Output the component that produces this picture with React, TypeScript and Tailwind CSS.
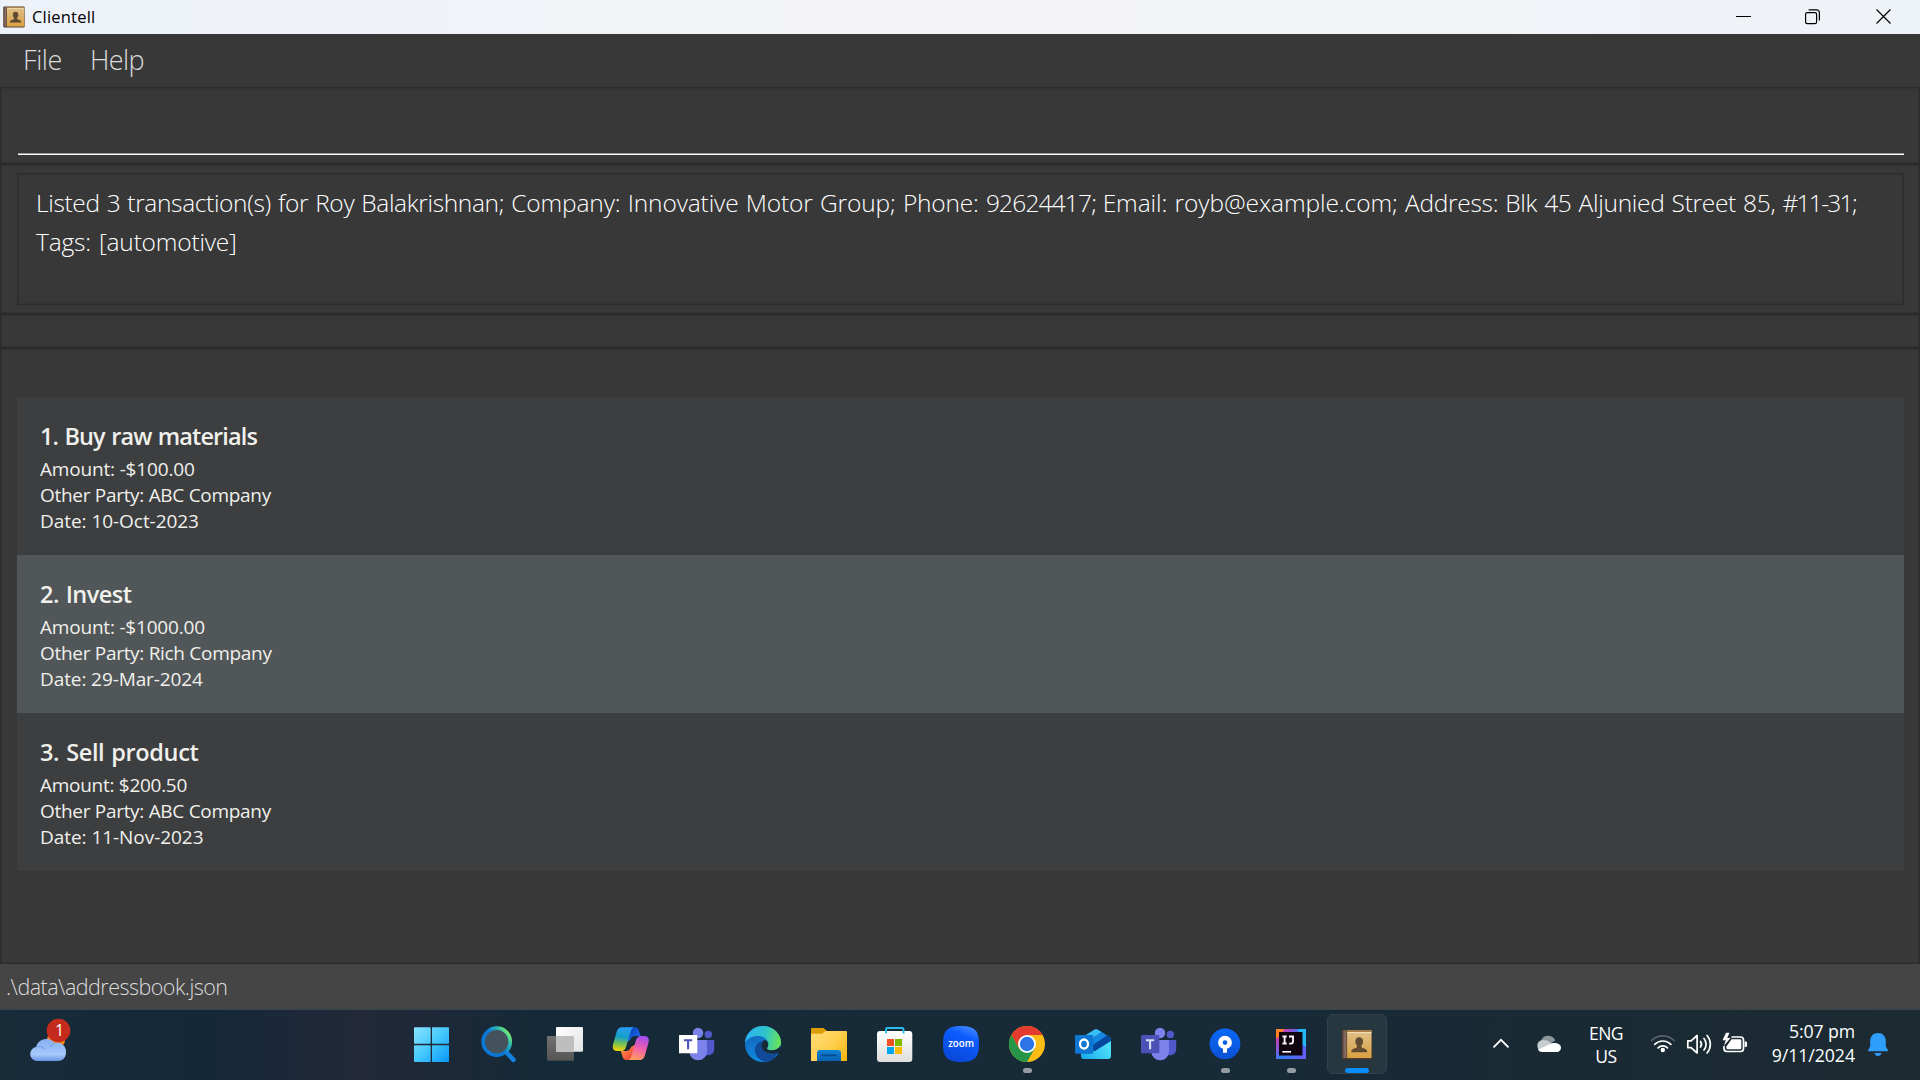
import React from "react";

type IconProps = { children: React.ReactNode };

function Slot({ children }: IconProps) {
  return (
    <svg width="66" height="70" viewBox="0 0 66 70" className="block shrink-0">
      {children}
    </svg>
  );
}

function Running() {
  return <rect x="29" y="58" width="9" height="5" rx="2.5" fill="#949ca2" />;
}

function BookIcon({ className }: { className: string }) {
  return (
    <svg viewBox="0 0 32 32" className={className}>
      <defs>
        <linearGradient id="bookCover" x1="0" y1="0" x2="0" y2="1">
          <stop offset="0" stopColor="#e0c088" />
          <stop offset="0.5" stopColor="#dcb168" />
          <stop offset="1" stopColor="#d9a040" />
        </linearGradient>
        <linearGradient id="bookSpine" x1="0" y1="0" x2="1" y2="0">
          <stop offset="0" stopColor="#5f4a42" />
          <stop offset="0.6" stopColor="#8b7264" />
          <stop offset="1" stopColor="#5c4638" />
        </linearGradient>
      </defs>
      <rect x="0.5" y="0.8" width="31" height="30.4" rx="1.2" fill="#4a3628" />
      <rect x="5.5" y="1.5" width="25.5" height="28.5" fill="url(#bookCover)" />
      <rect x="5.5" y="1.5" width="25.5" height="1.6" fill="#a88048" />
      <rect x="5.5" y="3.1" width="25.5" height="1.2" fill="#f0dcb0" />
      <rect x="1" y="1.5" width="4.8" height="28.5" fill="url(#bookSpine)" />
      <path
        d="M18.3 8.4c2.5 0 4 1.8 4 4.3 0 2-.8 3.500-1.700 4.600-.2 1.500.4 2.100 2 2.600 2.200.7 4 1.300 4 4H10c0-2.700 1.800-3.300 4-4 1.600-.5 2.200-1.100 2-2.600-.9-1.100-1.700-2.600-1.700-4.600 0-2.500 1.500-4.300 4-4.300z"
        fill="#604a30"
      />
    </svg>
  );
}

function TitleBar() {
  return (
    <header className="flex h-[34px] items-center justify-between bg-linear-to-r from-[#edf2fa] via-[#f3f3f5] to-[#eef3f8] text-black">
      <div className="flex items-center pl-[3px]">
        <BookIcon className="size-[22px]" />
        <span className="ml-[7px] pt-px text-[16.500px] tracking-[0.200px]">Clientell</span>
      </div>
      <div className="flex items-center pr-[29px]">
        <svg width="15" height="16" viewBox="0 0 15 16" className="mr-[54px]">
          <path d="M0 7.500h15" stroke="#000" strokeWidth="1" />
        </svg>
        <svg width="15" height="16" viewBox="0 0 15 16" className="mr-[56px]" fill="none" stroke="#000" strokeWidth="1.200">
          <rect x="0.6" y="3.6" width="11" height="11" rx="1.6" />
          <path d="M3.600 0.800h8.200a2.600 2.600 0 0 1 2.600 2.600v8" />
        </svg>
        <svg width="15" height="16" viewBox="0 0 15 16">
          <path d="M0.500 0.500l14 14M14.500 0.500l-14 14" stroke="#000" strokeWidth="1.200" />
        </svg>
      </div>
    </header>
  );
}

function MenuBar() {
  return (
    <nav className="flex h-[53px] items-center pb-px pl-[23px] text-[27px] font-light text-[#dcdcdc]">
      <span className="w-[67px] tracking-[-0.400px]">File</span>
      <span className="tracking-[-0.600px]">Help</span>
    </nav>
  );
}

type Line = { text: string; tracking: string };

type Transaction = {
  title: Line;
  details: Line[];
  shade: string;
};

const resultParts: Line[] = [
  { text: "Listed 3 transaction(s) for Roy Balakrishnan; ", tracking: "tracking-[-0.350px]" },
  { text: "Company: Innovative Motor Group; ", tracking: "tracking-[-0.130px]" },
  { text: "Phone: ", tracking: "tracking-[-0.180px]" },
  { text: "92624417; ", tracking: "tracking-[-0.840px]" },
  { text: "Email: royb@example.com; ", tracking: "tracking-[-0.080px]" },
  { text: "Address: Blk 45 Aljunied Street 85, ", tracking: "tracking-[-0.300px]" },
  { text: "#11-31;", tracking: "tracking-[-1.700px]" },
];

const transactions: Transaction[] = [
  {
    title: { text: "1. Buy raw materials", tracking: "tracking-[-0.900px]" },
    details: [
      { text: "Amount: -$100.00", tracking: "tracking-[-0.170px]" },
      { text: "Other Party: ABC Company", tracking: "tracking-[-0.300px]" },
      { text: "Date: 10-Oct-2023", tracking: "tracking-[-0.050px]" },
    ],
    shade: "bg-[#3c3e3f]",
  },
  {
    title: { text: "2. Invest", tracking: "tracking-[-0.500px]" },
    details: [
      { text: "Amount: -$1000.00", tracking: "tracking-[-0.200px]" },
      { text: "Other Party: Rich Company", tracking: "tracking-[-0.300px]" },
      { text: "Date: 29-Mar-2024", tracking: "tracking-[-0.100px]" },
    ],
    shade: "bg-[#515658]",
  },
  {
    title: { text: "3. Sell product", tracking: "tracking-[-0.350px]" },
    details: [
      { text: "Amount: $200.50", tracking: "tracking-[-0.280px]" },
      { text: "Other Party: ABC Company", tracking: "tracking-[-0.300px]" },
      { text: "Date: 11-Nov-2023", tracking: "tracking-[-0.050px]" },
    ],
    shade: "bg-[#3c3e3f]",
  },
];

function TransactionCard({ item }: { item: Transaction }) {
  return (
    <li className={`h-[158px] pl-[23px] pt-[22px] text-[#f0f0ec] ${item.shade}`}>
      <h2 className={`h-[34px] text-[23.500px] leading-[34px] font-semibold [word-spacing:1.200px] ${item.title.tracking}`}>
        {item.title.text}
      </h2>
      <div className="pt-[3px] text-[19px] leading-[26px]">
        {item.details.map((line) => (
          <p key={line.text} className={line.tracking}>
            {line.text}
          </p>
        ))}
      </div>
    </li>
  );
}

function StartIcon() {
  return (
    <Slot>
      <defs>
        <linearGradient id="win" x1="14" y1="17" x2="49" y2="52" gradientUnits="userSpaceOnUse">
          <stop offset="0" stopColor="#8ae4ff" />
          <stop offset="0.5" stopColor="#45c8fc" />
          <stop offset="1" stopColor="#0897fa" />
        </linearGradient>
      </defs>
      <g fill="url(#win)">
        <rect x="14" y="17.300" width="16.700" height="16.500" rx="0.800" />
        <rect x="32" y="17.300" width="17" height="16.500" rx="0.800" />
        <rect x="14" y="35.300" width="16.700" height="16.700" rx="0.800" />
        <rect x="32" y="35.300" width="17" height="16.700" rx="0.800" />
      </g>
    </Slot>
  );
}

function SearchIcon() {
  return (
    <Slot>
      <defs>
        <linearGradient id="lens" x1="18" y1="38" x2="42" y2="20" gradientUnits="userSpaceOnUse">
          <stop offset="0.45" stopColor="#0a78d4" />
          <stop offset="0.75" stopColor="#2bb5b8" />
          <stop offset="0.95" stopColor="#6fe870" />
        </linearGradient>
      </defs>
      <path d="M41.500 43.500l6 6.300" stroke="#1280dc" strokeWidth="4.600" strokeLinecap="round" />
      <circle cx="30.700" cy="31.700" r="13.500" fill="#44525c" stroke="url(#lens)" strokeWidth="3.700" />
    </Slot>
  );
}

function TaskViewIcon() {
  return (
    <Slot>
      <defs>
        <linearGradient id="tvBack" x1="0" y1="0" x2="0" y2="1">
          <stop offset="0" stopColor="#727272" />
          <stop offset="1" stopColor="#545454" />
        </linearGradient>
        <linearGradient id="tvFront" x1="0" y1="0" x2="1" y2="1">
          <stop offset="0" stopColor="#ffffff" />
          <stop offset="1" stopColor="#e2e2e2" />
        </linearGradient>
      </defs>
      <rect x="15" y="26" width="27" height="24.700" rx="1.300" fill="url(#tvBack)" />
      <rect x="24" y="17" width="27" height="24.700" rx="1.300" fill="url(#tvFront)" />
      <path d="M24 26h16.700a1.300 1.300 0 0 1 1.300 1.300v14.400H25.300a1.300 1.300 0 0 1-1.300-1.300z" fill="#bebebe" />
    </Slot>
  );
}

function CopilotIcon() {
  return (
    <Slot>
      <defs>
        <linearGradient id="cpA" x1="22" y1="17" x2="19" y2="41" gradientUnits="userSpaceOnUse">
          <stop offset="0" stopColor="#2a9cf0" />
          <stop offset="0.4" stopColor="#14a0c8" />
          <stop offset="0.7" stopColor="#7cc250" />
          <stop offset="1" stopColor="#ffd400" />
        </linearGradient>
        <linearGradient id="cpB" x1="44" y1="26" x2="38" y2="50" gradientUnits="userSpaceOnUse">
          <stop offset="0" stopColor="#a14cf0" />
          <stop offset="0.5" stopColor="#f05fae" />
          <stop offset="1" stopColor="#ff9d5c" />
        </linearGradient>
        <linearGradient id="cpC" x1="32" y1="17" x2="42" y2="26" gradientUnits="userSpaceOnUse">
          <stop offset="0" stopColor="#0b40b8" />
          <stop offset="1" stopColor="#1c68e8" />
        </linearGradient>
        <linearGradient id="cpD" x1="24" y1="41" x2="33" y2="50" gradientUnits="userSpaceOnUse">
          <stop offset="0" stopColor="#ff8a3c" />
          <stop offset="1" stopColor="#ee3f42" />
        </linearGradient>
      </defs>
      <path d="M28 17.300h9c2.300 0 3.300 1.300 4 3.600l1.600 5.100h-5.300c-2.600 0-4 1.200-4.800 3.800L28 33z" fill="url(#cpC)" />
      <path d="M37 50h-8.500c-2.300 0-3.300-1.300-4-3.600L22.800 41h5c2.700 0 4.200-1.200 5-3.800L38 34z" fill="url(#cpD)" />
      <path d="M24 17.300h12.500c-2 .3-3 1.600-3.700 3.900l-4.600 15.300c-.9 3-2.300 4.500-5.100 4.500h-4c-4 0-5-3.200-3.900-7l3.300-11.700c1-3.600 2.500-5 5.500-5z" fill="url(#cpA)" />
      <path d="M41.500 50H29.700c2-.3 3-1.600 3.700-3.900l4.500-15.600c.9-3 2.300-4.500 5.100-4.500h3.500c4 0 5 3.200 3.900 7L47 45c-1 3.600-2.500 5-5.500 5z" fill="url(#cpB)" />
    </Slot>
  );
}

function TeamsIcon({ personal }: { personal: boolean }) {
  return (
    <Slot>
      <circle cx="44.300" cy="24.400" r="3.700" fill="#5059c9" />
      <circle cx="34" cy="23" r="5.200" fill="#7b83eb" />
      <path d="M39 30h11.200v9.500a5.800 5.800 0 0 1-5.800 5.800H39z" fill="#5059c9" />
      <path d="M25.300 30H42a1 1 0 0 1 1 1v10.500a8.800 8.800 0 0 1-17.700 0z" fill="#7b83eb" />
      <rect x="15" y="25" width="18.300" height="18.300" rx={personal ? 1 : 0.300} fill={personal ? "#4a52b5" : "#ffffff"} />
      <path d="M20 30.300h8.200M24.100 30v9.200" stroke={personal ? "#d9dbf5" : "#4b53bc"} strokeWidth="2.100" />
    </Slot>
  );
}

function EdgeIcon() {
  return (
    <Slot>
      <defs>
        <linearGradient id="edTop" x1="16" y1="26" x2="51" y2="34" gradientUnits="userSpaceOnUse">
          <stop offset="0" stopColor="#2db4f0" />
          <stop offset="0.500" stopColor="#2cc4cc" />
          <stop offset="1" stopColor="#6fe650" />
        </linearGradient>
        <linearGradient id="edLeft" x1="20" y1="26" x2="28" y2="52" gradientUnits="userSpaceOnUse">
          <stop offset="0" stopColor="#1468c0" />
          <stop offset="1" stopColor="#0c8ee4" />
        </linearGradient>
      </defs>
      <circle cx="33" cy="34" r="18" fill="url(#edLeft)" />
      <path d="M15 33C15.500 23.500 23 16 33 16c10.500 0 18 8 18 16 0 5-3.800 8.300-9 8.300-3.200 0-5-.8-5-1.900 0-.8 1.300-1.700 1.300-4.100 0-4-4-8.300-10-8.300-6.300 0-11.300 2.700-13.300 7z" fill="url(#edTop)" />
      <path d="M38.300 34.300c0 2.400-1.300 3.300-1.300 4.100 0 1.100 1.800 1.900 5 1.900 3.800 0 6.800-1.700 8.200-4.500l2 6-3.600 1.500c-3.300 1-7 1-10.600 0-4.500-1.300-6.800-4.600-6.800-7.800 0-2.200 1.200-4.300 3-5.400 2.700.2 4.100 2.200 4.100 4.200z" fill="#162a38" />
      <path d="M48.300 42.500c-3.300 1.500-7 1.700-10.300.8-4.500-1.200-7-4.500-6.800-8.300 0-1.500.6-3 1.500-4-5 .5-8 5-7.800 9.500.3 6.500 5.800 11.500 12.500 11.300 4.500-1.600 8.400-5 10.900-9.300z" fill="#114a98" />
    </Slot>
  );
}

function ExplorerIcon() {
  return (
    <Slot>
      <defs>
        <linearGradient id="fold" x1="15" y1="20" x2="51" y2="51" gradientUnits="userSpaceOnUse">
          <stop offset="0" stopColor="#ffdd78" />
          <stop offset="0.500" stopColor="#ffd052" />
          <stop offset="1" stopColor="#f8b40c" />
        </linearGradient>
        <linearGradient id="tray" x1="0" y1="0" x2="0" y2="1">
          <stop offset="0" stopColor="#0f82d8" />
          <stop offset="1" stopColor="#0862b0" />
        </linearGradient>
      </defs>
      <path d="M15 19a1 1 0 0 1 1-1h10.500c1 0 1.600.4 2.300 1.100L31 21v6H15z" fill="#dc9c04" />
      <path d="M15 25c0-1 .4-1.300 1.300-1.300h9c1 0 1.700-.4 2.400-1.100l.8-.8c.6-.6 1-.8 2-.8H50a1 1 0 0 1 1 1v29H15z" fill="url(#fold)" />
      <path d="M21 51v-8a3 3 0 0 1 3-3h18a3 3 0 0 1 3 3v8z" fill="url(#tray)" />
      <path d="M26 45.300h14" stroke="#07498c" strokeWidth="1.700" strokeLinecap="round" />
    </Slot>
  );
}

function StoreIcon() {
  return (
    <Slot>
      <defs>
        <linearGradient id="bag" x1="0" y1="0" x2="0" y2="1">
          <stop offset="0" stopColor="#ffffff" />
          <stop offset="1" stopColor="#dedede" />
        </linearGradient>
      </defs>
      <rect x="15" y="21" width="35.300" height="31" rx="3" fill="url(#bag)" />
      <path d="M24 23.500v-4.200c0-.8.400-1.300 1.300-1.300h14.900c.9 0 1.300.5 1.300 1.300v4.200" fill="none" stroke="#28bdec" strokeWidth="1.900" />
      <rect x="25" y="29" width="7" height="7" fill="#f25022" />
      <rect x="33" y="29" width="7" height="7" fill="#7fba00" />
      <rect x="25" y="37" width="7" height="7" fill="#00a4ef" />
      <rect x="33" y="37" width="7" height="7" fill="#ffb900" />
    </Slot>
  );
}

function ZoomIcon() {
  return (
    <Slot>
      <defs>
        <linearGradient id="zm" x1="44" y1="17" x2="30" y2="52" gradientUnits="userSpaceOnUse">
          <stop offset="0" stopColor="#4487ff" />
          <stop offset="0.300" stopColor="#0b5cff" />
          <stop offset="1" stopColor="#0a48d8" />
        </linearGradient>
      </defs>
      <path d="M33 16c13.500 0 18 4.500 18 18s-4.500 18-18 18-18-4.500-18-18 4.500-18 18-18z" fill="url(#zm)" />
      <text x="20.200" y="36.800" fontFamily="Open Sans" fontWeight="600" fontSize="10.500" fill="#fff" textLength="26" lengthAdjust="spacingAndGlyphs">
        zoom
      </text>
    </Slot>
  );
}

function ChromeIcon() {
  return (
    <Slot>
      <circle cx="33" cy="34" r="18" fill="#fbbc14" />
      <path d="M33 25h15.590a18 18 0 0 0-31.180 0L25.200 38.500z" fill="#e33b2e" />
      <path d="M17.410 25A18 18 0 0 0 33 52l7.800-13.500H25.200z" fill="#269547" />
      <circle cx="33" cy="34" r="9" fill="#fff" />
      <circle cx="33" cy="34" r="7.200" fill="#2c74e8" />
      <Running />
    </Slot>
  );
}

function OutlookIcon() {
  return (
    <Slot>
      <defs>
        <linearGradient id="olk" x1="26" y1="49" x2="48" y2="36" gradientUnits="userSpaceOnUse">
          <stop offset="0" stopColor="#1cb0ee" />
          <stop offset="1" stopColor="#4ddcfa" />
        </linearGradient>
      </defs>
      <path d="M21 28l13.800-8.400a2.500 2.500 0 0 1 2.600 0L51 28v6L36 44 21 36z" fill="#0f6cc4" />
      <path d="M21 28l13.800-8.400a2.500 2.500 0 0 1 2.600 0l4.200 2.500L25 33z" fill="#38c0f4" />
      <path d="M41.600 22.100L47 25.500 32.500 35.500 25 33z" fill="#1488e0" />
      <path d="M47 25.500l3 1.900c.7.500 1 1 1 1.600v2.500L35 42 30 37z" fill="#0648a0" />
      <path d="M51 31v15a3 3 0 0 1-3 3H24a3 3 0 0 1-3-3v-5h14z" fill="url(#olk)" />
      <rect x="15" y="25" width="18.300" height="18.700" rx="1.300" fill="#0f76d2" />
      <ellipse cx="24" cy="34" rx="4" ry="4.500" fill="none" stroke="#fff" strokeWidth="2.300" />
    </Slot>
  );
}

function SourcetreeIcon() {
  return (
    <Slot>
      <defs>
        <linearGradient id="src" x1="0" y1="0" x2="0" y2="1">
          <stop offset="0" stopColor="#0a68f8" />
          <stop offset="1" stopColor="#0a52d4" />
        </linearGradient>
      </defs>
      <circle cx="33" cy="33.800" r="15.400" fill="url(#src)" />
      <path d="M31 42.700v-4c-3-.8-4.900-3.200-4.900-6a6.900 6.900 0 0 1 13.800 0c0 2.800-1.900 5.200-4.900 6v4z" fill="#fff" />
      <circle cx="33" cy="32.600" r="2.300" fill="#0a5ee8" />
      <Running />
    </Slot>
  );
}

function IntellijIcon() {
  return (
    <Slot>
      <defs>
        <linearGradient id="ij" x1="18" y1="22" x2="48" y2="46" gradientUnits="userSpaceOnUse">
          <stop offset="0" stopColor="#fc3a7a" />
          <stop offset="0.250" stopColor="#a04cd0" />
          <stop offset="0.500" stopColor="#2f7df6" />
          <stop offset="1" stopColor="#6a5cf4" />
        </linearGradient>
      </defs>
      <rect x="18" y="19" width="30" height="30" fill="url(#ij)" />
      <path d="M18 19h8l-4 8-4 1z" fill="#fd8224" />
      <path d="M40 19h8v18l-4-3z" fill="#21b8f4" />
      <rect x="21" y="22" width="23.500" height="23.500" fill="#10040f" />
      <path d="M24.500 26.500h4.200M26.600 26.500v7M24.500 33.500h4.200M31 26.500h4v5c0 1.500-.9 2.100-2.200 2.100h-1.600" fill="none" stroke="#fff" strokeWidth="1.800" />
      <rect x="24.300" y="41" width="8.700" height="1.600" fill="#fff" />
      <Running />
    </Slot>
  );
}

function ActiveApp() {
  return (
    <div className="flex h-[70px] w-[66px] flex-col items-center pt-[4px]">
      <div className="flex size-[60px] flex-col items-center rounded-[6px] border border-[#31424c] bg-[#263740] pt-[14px]">
        <BookIcon className="h-[31px] w-[32px]" />
        <div className="mt-[8px] h-[5px] w-[24px] rounded-full bg-[#0a8cfa]" />
      </div>
    </div>
  );
}

function WeatherIcon() {
  return (
    <svg width="100" height="70" viewBox="0 0 100 70" className="block">
      <defs>
        <linearGradient id="wx" x1="0" y1="0" x2="0" y2="1">
          <stop offset="0" stopColor="#86b0f4" />
          <stop offset="0.700" stopColor="#a6c8fa" />
          <stop offset="1" stopColor="#6a94e4" />
        </linearGradient>
      </defs>
      <circle cx="56" cy="30" r="9" fill="#f58518" />
      <path d="M37 51a7 7 0 0 1-1-13.900 10.500 10.500 0 0 1 18.500-4A8.800 8.800 0 0 1 66 42.500C66 47.500 62.500 51 58 51z" fill="url(#wx)" />
      <path d="M36 37c4-1.500 7 0 9 2.500M50 37c1.200-2 3-3.200 5-3.800" fill="none" stroke="#7ba4ec" strokeWidth="1.200" />
      <circle cx="58.500" cy="20.500" r="11.800" fill="#c42b1c" />
      <text x="59.500" y="26" textAnchor="middle" fontFamily="Open Sans" fontSize="16" fill="#fff">
        1
      </text>
    </svg>
  );
}

function TrayIcons() {
  return (
    <div className="flex h-[70px] w-[520px] items-center text-white">
      <svg width="70" height="70" viewBox="0 0 70 70" className="ml-[92px]">
        <path d="M1.500 37.300l7.500-7.500 7.500 7.500" fill="none" stroke="#fff" strokeWidth="1.900" />
        <path d="M49 30.700a7.800 7.800 0 0 1 14.300-.3l-8 5z" fill="#8b979c" />
        <path d="M50.500 41.500a5.700 5.700 0 0 1-.8-11.200c3.800-.8 6.800.7 9.300 2.800l3 4-10 4.900z" fill="#c6cccf" />
        <path d="M46 39.500L60 33.300c4.500-1 9 .8 9 4.500 0 2.500-1.800 4.200-4.200 4.200H50c-1.700 0-3.200-.8-4-2.500z" fill="#fff" />
      </svg>
      <div className="ml-[22px] w-[44px] text-center text-[17.500px] leading-[23px] tracking-[-0.500px]">
        <p>ENG</p>
        <p>US</p>
      </div>
      <svg width="104" height="70" viewBox="0 0 104 70" className="ml-[18px]">
        <g fill="none" stroke="#fff" strokeWidth="1.700" strokeLinecap="round">
          <path d="M5.500 30.500a16.200 16.200 0 0 1 22.500 0" stroke="#566369" />
          <path d="M8.700 34.300a11.600 11.600 0 0 1 16.200 0" />
          <path d="M12.100 37.800a6.700 6.700 0 0 1 9.400 0" />
          <path d="M41.800 30.800h3.300l6-5.300v17.500l-6-5.300h-3.300z" strokeLinejoin="round" />
          <path d="M54.500 31.500a4.700 4.700 0 0 1 0 5.500M58 28.500a9 9 0 0 1 0 11.500M61.100 25.500a13.500 13.500 0 0 1 0 17.500" />
          <path d="M86 27h8.500a3 3 0 0 1 3 3v8.500a3 3 0 0 1-3 3H81a3 3 0 0 1-3-3v-2" />
        </g>
        <circle cx="16.800" cy="40" r="2.200" fill="#fff" />
        <path d="M85.500 29.300h8.500a1.300 1.300 0 0 1 1.300 1.300v7.300a1.300 1.300 0 0 1-1.300 1.300H81.700a1.300 1.300 0 0 1-1.300-1.300v-1.400z" fill="#fff" />
        <path d="M98.700 31.500h1.300a1 1 0 0 1 1 1V36a1 1 0 0 1-1 1h-1.300z" fill="#fff" />
        <path d="M80 22.800l-3.500 7.400h3.200l-1.700 5.600 6.500-7.800h-3.300l2.300-5.200z" fill="#fff" />
      </svg>
      <div className="w-[105px] pb-[4px] text-right text-[17.700px] leading-[24px]">
        <p className="tracking-[-0.100px]">5:07 pm</p>
        <p className="tracking-[-0.050px]">9/11/2024</p>
      </div>
      <svg width="22" height="70" viewBox="0 0 22 70" className="ml-[12px]">
        <path d="M11 23c4.800 0 7.800 3.400 7.800 7.800v5.400l2 3.800c.3.800 0 1.300-.8 1.300H2c-.8 0-1.100-.5-.8-1.300l2-3.800v-5.400c0-4.400 3-7.800 7.800-7.800z" fill="#2f9dfa" />
        <path d="M7.500 43h7c-.5 1.900-1.700 3-3.500 3s-3-1.100-3.500-3z" fill="#2f9dfa" />
      </svg>
    </div>
  );
}

function Taskbar() {
  return (
    <footer className="flex h-[71px] border-t border-[#34454f] bg-[linear-gradient(90deg,#182b39_0px,#14283a_200px,#222838_360px,#1e2838_420px,#152a38_540px,#172a38_1200px,#1c2a31_1920px)]">
      <div className="w-[400px] shrink-0">
        <WeatherIcon />
      </div>
      <div className="flex shrink-0">
        <StartIcon />
        <SearchIcon />
        <TaskViewIcon />
        <CopilotIcon />
        <TeamsIcon personal={false} />
        <EdgeIcon />
        <ExplorerIcon />
        <StoreIcon />
        <ZoomIcon />
        <ChromeIcon />
        <OutlookIcon />
        <TeamsIcon personal />
        <SourcetreeIcon />
        <IntellijIcon />
        <ActiveApp />
      </div>
      <div className="ml-[10px] shrink-0">
        <TrayIcons />
      </div>
    </footer>
  );
}

export default function App() {
  return (
    <div className="flex h-[1080px] w-[1920px] flex-col overflow-hidden bg-[#383838] font-['Open_Sans','Noto_Sans',sans-serif]">
      <TitleBar />
      <MenuBar />
      <section className="h-[77px] border border-[#2b2b2b] px-[17px] pt-[65px] shadow-[inset_0_0_0_1px_#333333]">
        <div className="mr-[-2px] h-[2px] border-t border-[#9a9a9a] bg-white" />
      </section>
      <section className="h-[150px] border border-[#2b2b2b] px-[16px] pt-[8px] shadow-[inset_0_0_0_1px_#333333]">
        <div className="mr-[-1px] h-[132px] border border-[#2b2b2b] pl-[18px] pt-[9px] text-[24.500px] leading-[39px] font-light text-white shadow-[inset_0_0_0_1px_#333333]">
          <p className="whitespace-nowrap [word-spacing:1px]">
            {resultParts.map((part) => (
              <span key={part.text} className={part.tracking}>
                {part.text}
              </span>
            ))}
          </p>
          <p className="tracking-[-0.200px] [word-spacing:2px]">Tags: [automotive]</p>
        </div>
      </section>
      <section className="h-[34px] border border-[#2b2b2b] shadow-[inset_0_0_0_1px_#333333]" />
      <main className="h-[616px] border border-[#2b2b2b] pl-[16px] pr-[15px] pt-[48px] shadow-[inset_0_0_0_1px_#333333]">
        <ul>
          {transactions.map((item) => (
            <TransactionCard key={item.title.text} item={item} />
          ))}
        </ul>
      </main>
      <div className="h-[45px] bg-[#454545] pl-[6px] pt-[4px] text-[21.500px] leading-[37px] font-light tracking-[-0.520px] text-[#dcdcdc]">
        .\data\addressbook.json
      </div>
      <Taskbar />
    </div>
  );
}
